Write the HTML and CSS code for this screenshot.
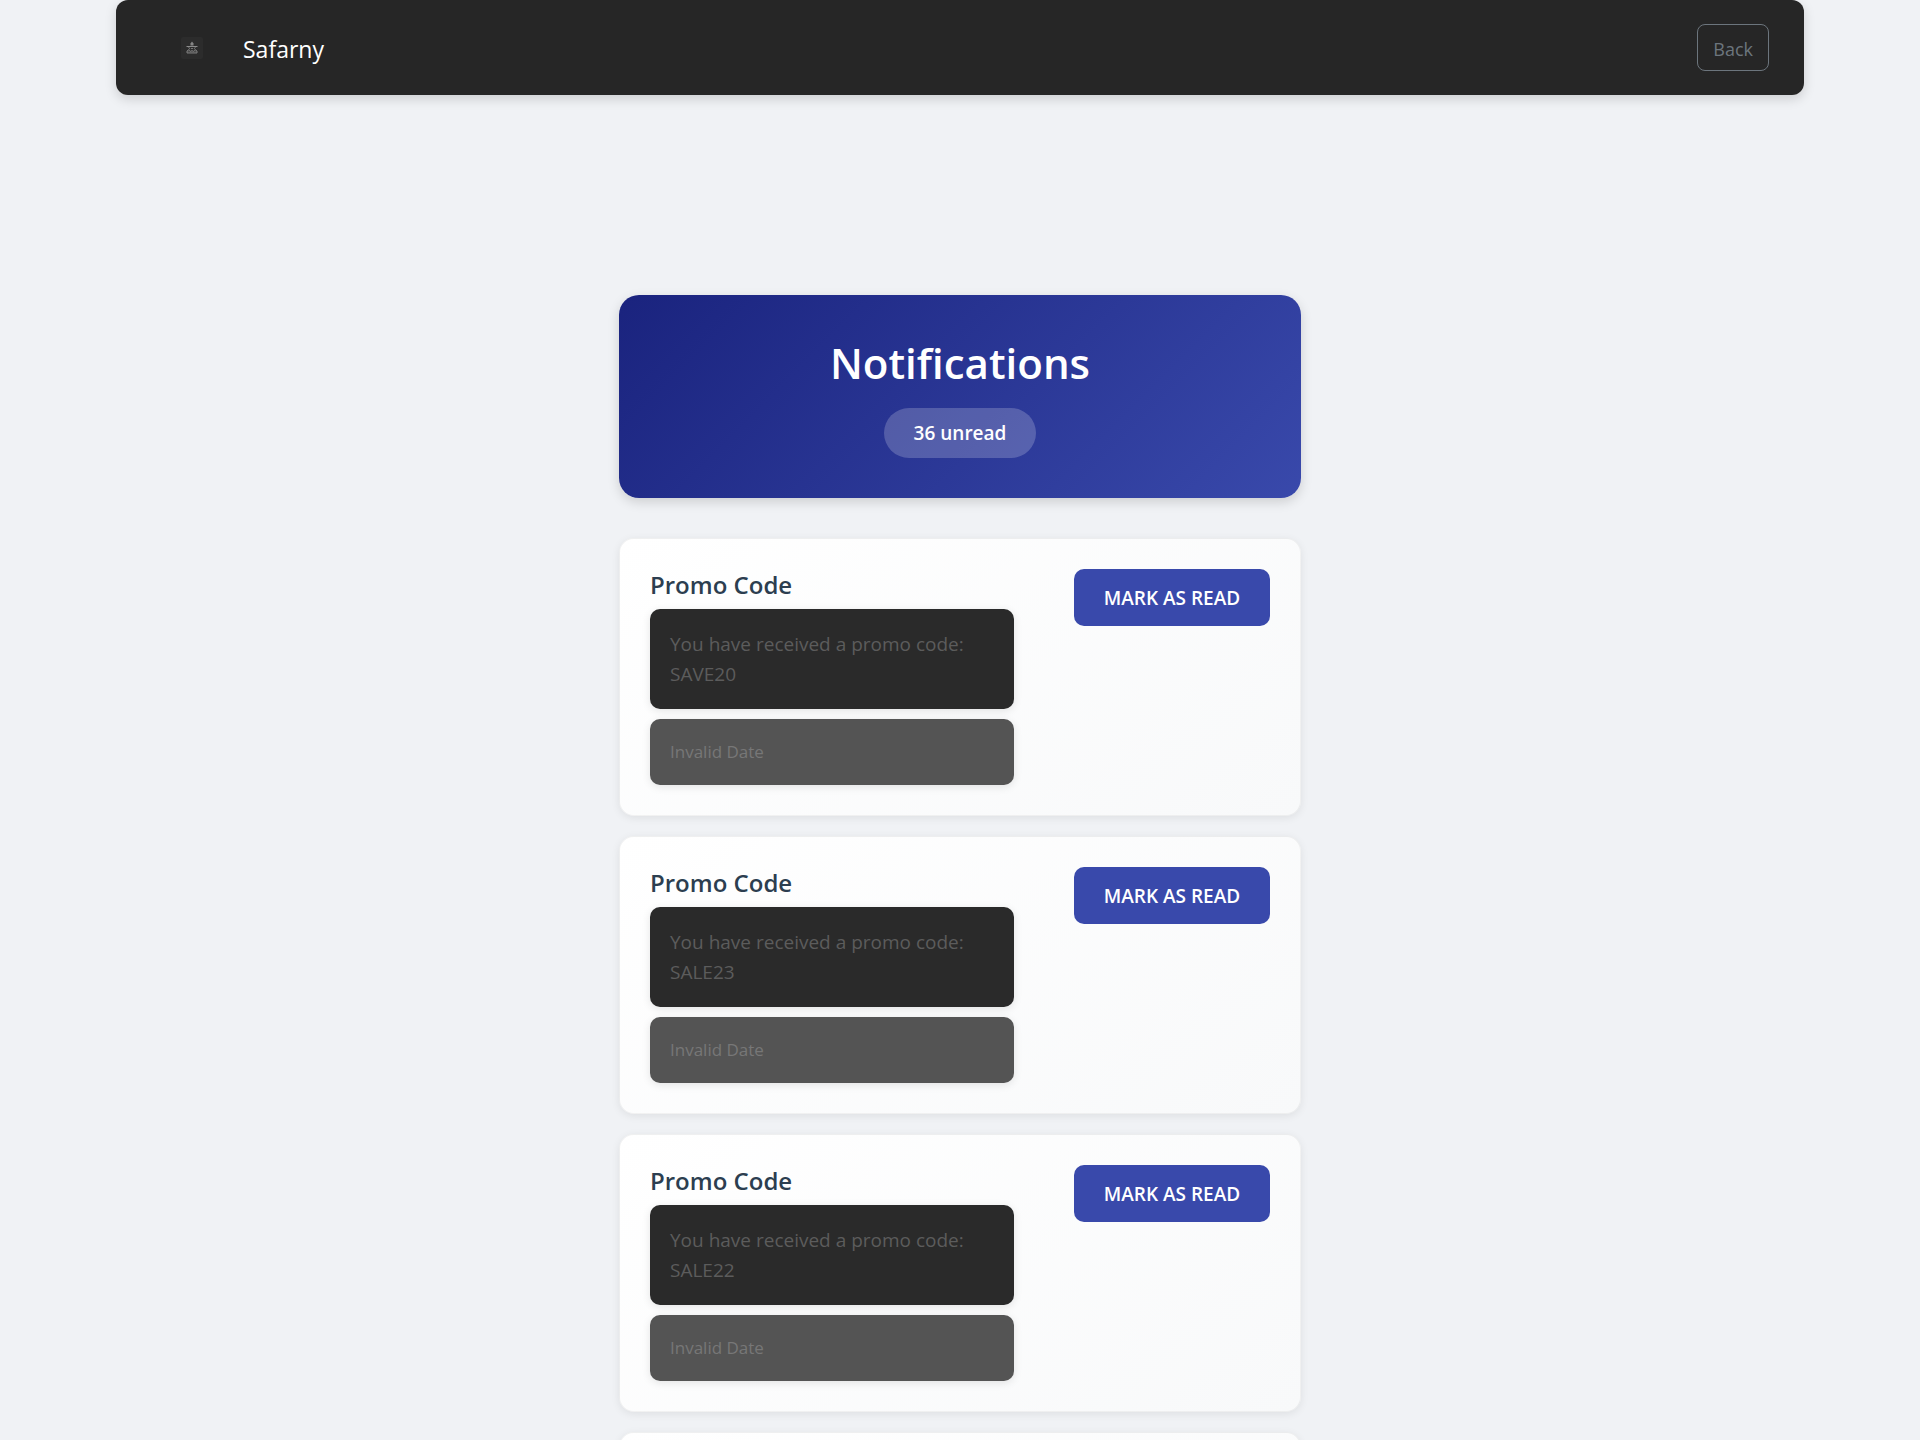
FILE: index.html
```html
<!DOCTYPE html>
<html lang="en">
<head>
<meta charset="utf-8">
<meta name="viewport" content="width=device-width, initial-scale=1">
<title>Safarny - Notifications</title>
<link rel="stylesheet" href="styles.css">
</head>
<body>
<header class="navbar">
  <div class="brand">
    <svg class="brand-logo" viewBox="0 0 22 22" aria-hidden="true">
      <rect width="22" height="22" rx="2" fill="#2c2c2c"/>
      <path d="M11 4.500l1.500 2v2h-3v-2z" fill="#858585"/>
      <path d="M5.500 9.500h11" stroke="#8c8c8c" fill="none"/>
      <path d="M7.500 10l1.500 2M14.500 10l-1.500 2M10 11.500h2" stroke="#747474" fill="none"/>
      <path d="M6 16v-2l2-1.500 1.500 2 1.500-1 1.500 1 1.500-2 2 1.500v2z" fill="#4a4a4a" stroke="#7c7c7c"/>
    </svg>
    <span class="brand-name">Safarny</span>
  </div>
  <button class="back" type="button">Back</button>
</header>
<main class="page">
  <section class="hero">
    <h1 class="hero-title">Notifications</h1>
    <span class="badge">36 unread</span>
  </section>
  <article class="card">
    <div class="content">
      <h2 class="title">Promo Code</h2>
      <p class="message">You have received a promo code: SAVE20</p>
      <p class="date">Invalid Date</p>
    </div>
    <button class="mark" type="button">Mark as read</button>
  </article>
  <article class="card">
    <div class="content">
      <h2 class="title">Promo Code</h2>
      <p class="message">You have received a promo code: SALE23</p>
      <p class="date">Invalid Date</p>
    </div>
    <button class="mark" type="button">Mark as read</button>
  </article>
  <article class="card">
    <div class="content">
      <h2 class="title">Promo Code</h2>
      <p class="message">You have received a promo code: SALE22</p>
      <p class="date">Invalid Date</p>
    </div>
    <button class="mark" type="button">Mark as read</button>
  </article>
  <article class="card"></article>
</main>
</body>
</html>
```
FILE: styles.css
```css
* {
  box-sizing: border-box;
}

body {
  margin: 0;
  height: 100vh;
  overflow: hidden;
  background: #f0f2f5;
  font-family: "Segoe UI", "Open Sans", "Noto Sans", sans-serif;
  font-size: 19px;
  line-height: 30px;
}

h1,
h2,
p {
  margin: 0;
}

button {
  font-family: inherit;
  cursor: pointer;
}

.navbar {
  display: flex;
  align-items: center;
  justify-content: space-between;
  height: 95px;
  margin: 0 116px;
  padding: 0 35px 0 65px;
  border-radius: 12px;
  background: #262626;
  box-shadow: 0 4px 12px rgba(0, 0, 0, 0.15);
}

.brand {
  display: flex;
  align-items: center;
  gap: 40px;
}

.brand-logo {
  width: 22px;
  height: 22px;
}

.brand-name {
  padding-top: 2px;
  color: #fff;
  font-size: 23px;
}

.back {
  height: 47px;
  padding: 2px 15px 0;
  border: 1px solid #6c757d;
  border-radius: 8px;
  background: transparent;
  color: #6c757d;
  font-size: 18px;
}

.page {
  width: 722px;
  max-width: 100%;
  margin: 180px auto 0;
  padding: 20px;
}

.hero {
  display: flex;
  flex-direction: column;
  align-items: center;
  gap: 17px;
  margin-bottom: 40px;
  padding: 40px;
  border-radius: 20px;
  background: linear-gradient(135deg, #1a237e, #3949ab);
  box-shadow: 0 4px 12px rgba(0, 0, 0, 0.15);
  color: #fff;
}

.hero-title {
  font-size: 42px;
  font-weight: 600;
  line-height: 56px;
}

.badge {
  padding: 10px 30px;
  border-radius: 25px;
  background: rgba(255, 255, 255, 0.2);
  font-size: 19px;
  font-weight: 600;
}

.card {
  display: flex;
  align-items: flex-start;
  justify-content: space-between;
  gap: 60px;
  min-height: 278px;
  margin-bottom: 20px;
  padding: 30px;
  border: 1px solid rgba(0, 0, 0, 0.05);
  border-radius: 15px;
  background: linear-gradient(145deg, #fff, #f8f9fa);
  box-shadow: 0 2px 8px rgba(0, 0, 0, 0.08);
}

.content {
  flex: 1;
}

.title {
  padding-bottom: 8px;
  color: #2c3e50;
  font-size: 24px;
  font-weight: 600;
  line-height: 32px;
}

.message,
.date {
  padding: 20px;
  border-radius: 10px;
  box-shadow: 0 2px 8px rgba(0, 0, 0, 0.1);
}

.message {
  margin-bottom: 10px;
  background: #2a2a2a;
  color: #5c5c5c;
}

.date {
  background: #545454;
  color: #777;
  font-size: 17px;
  line-height: 26px;
}

.mark {
  min-width: 196px;
  height: 57px;
  padding: 0 28px;
  border: 0;
  border-radius: 10px;
  background: #3949ab;
  color: #fff;
  font-size: 19px;
  font-weight: 600;
  text-transform: uppercase;
}
```
